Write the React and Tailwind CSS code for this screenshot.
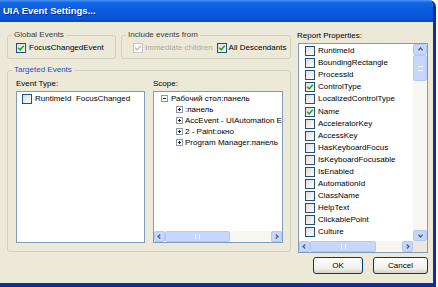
import React from "react";

const props = [
  ["RuntimeId", false],
  ["BoundingRectangle", false],
  ["ProcessId", false],
  ["ControlType", true],
  ["LocalizedControlType", false],
  ["Name", true],
  ["AcceleratorKey", false],
  ["AccessKey", false],
  ["HasKeyboardFocus", false],
  ["IsKeyboardFocusable", false],
  ["IsEnabled", false],
  ["AutomationId", false],
  ["ClassName", false],
  ["HelpText", false],
  ["ClickablePoint", false],
  ["Culture", false],
];

const scopeChildren = [
  ":панель",
  "AccEvent - UIAutomation Events",
  "2 - Paint:окно",
  "Program Manager:панель",
];

function Check({ checked, disabled }) {
  return (
    <span
      className={
        disabled
          ? "flex h-[10px] w-[10px] shrink-0 items-center justify-center border border-[#cac8bb] bg-white"
          : "flex h-[10px] w-[10px] shrink-0 items-center justify-center border border-[#1c5180] bg-[linear-gradient(135deg,#dcdcd7,#ffffff)]"
      }
    >
      {checked && (
        <svg viewBox="0 0 8 8" className="h-[8px] w-[8px]">
          <path
            d="M1.2 3.8 L3.2 5.8 L6.8 1.8"
            fill="none"
            stroke={disabled ? "#c4c2b4" : "#21a121"}
            strokeWidth="1.5"
          />
        </svg>
      )}
    </span>
  );
}

function Expander({ open }) {
  return (
    <span className="flex h-[7px] w-[7px] shrink-0 items-center justify-center border border-[#8b98a6] bg-white">
      <svg viewBox="0 0 5 5" className="h-[5px] w-[5px]">
        <path d="M1 2.5H4" stroke="#222" />
        {!open && <path d="M2.5 1V4" stroke="#222" />}
      </svg>
    </span>
  );
}

const arrows = {
  up: "M2 6 L5 3 L8 6",
  down: "M2 4 L5 7 L8 4",
  left: "M6 2 L3 5 L6 8",
  right: "M4 2 L7 5 L4 8",
};

function ScrollBtn({ dir, className }) {
  return (
    <span
      className={`flex shrink-0 items-center justify-center rounded-[2px] border border-[#b4c8f6] bg-[#c6d6fc] ${className}`}
    >
      <svg viewBox="0 0 10 10" className="h-[7px] w-[7px]">
        <path d={arrows[dir]} fill="none" stroke="#4d6185" strokeWidth="2" />
      </svg>
    </span>
  );
}

function HScroll({ thumbWidth }) {
  return (
    <div className="flex h-[11px] items-stretch bg-[#f7f6f1]">
      <ScrollBtn dir="left" className="w-[11px]" />
      <div className="flex flex-1">
        <span
          className={`flex items-center justify-center rounded-[2px] border border-[#b4c8f6] bg-[#c6d6fc] ${thumbWidth}`}
        >
          <span className="h-[5px] w-[5px] border-x border-[#eef3fe]" />
        </span>
      </div>
      <ScrollBtn dir="right" className="w-[11px]" />
    </div>
  );
}

function GroupLabel({ children, blue }) {
  return (
    <span
      className={
        blue
          ? "-mt-[6px] ml-[4px] h-[10px] w-fit bg-[#ece9d8] px-[2px] leading-[10px] text-[#1b4fd0]"
          : "-mt-[6px] ml-[4px] h-[10px] w-fit bg-[#ece9d8] px-[2px] leading-[10px] text-[#3b3b3b]"
      }
    >
      {children}
    </span>
  );
}

export default function App() {
  return (
    <div className="flex h-[287px] w-[438px] bg-white font-['Liberation_Sans',Arial,sans-serif] text-[8px] text-black">
      <div className="flex h-[287px] w-[436px] flex-col overflow-hidden rounded-tr-[7px] border-r-[3px] border-b-[4px] border-[#0c2f9c] bg-[#ece9d8]">
        {/* Title bar */}
        <div className="flex h-[22px] shrink-0 items-center bg-[linear-gradient(to_bottom,#4a96f8_0%,#1467e4_12%,#0a5bdd_45%,#0956d8_80%,#0848c4_100%)] pl-[3px]">
          <span className="text-[9.5px] font-bold text-white [text-shadow:1px_1px_0_#0a2f8c]">
            UIA Event Settings...
          </span>
        </div>

        {/* Body */}
        <div className="flex flex-1 flex-col">
          <div className="flex">
            {/* Left column */}
            <div className="ml-[7px] flex w-[284px] flex-col">
              <div className="mt-[13px] flex gap-[5px]">
                <div className="flex h-[24px] w-[109px] flex-col rounded-[3px] border border-[#d0d0bf]">
                  <GroupLabel>Global Events</GroupLabel>
                  <div className="ml-[8px] mt-[3px] flex items-center gap-[3px] whitespace-nowrap">
                    <Check checked />
                    <span className="leading-[10px]">FocusChangedEvent</span>
                  </div>
                </div>
                <div className="flex h-[24px] w-[170px] flex-col rounded-[3px] border border-[#d0d0bf]">
                  <GroupLabel>Include events from</GroupLabel>
                  <div className="ml-[11px] mt-[3px] flex items-center whitespace-nowrap">
                    <Check checked disabled />
                    <span className="ml-[2px] leading-[10px] text-[#aca899]">
                      Immediate children
                    </span>
                    <span className="ml-[4px]">
                      <Check checked />
                    </span>
                    <span className="ml-[2px] leading-[10px]">All Descendants</span>
                  </div>
                </div>
              </div>

              <div className="mt-[11px] flex h-[182px] flex-col rounded-[3px] border border-[#d0d0bf]">
                <GroupLabel blue>Targeted Events</GroupLabel>
                <div className="mt-[4px] flex gap-[8px] pl-[8px]">
                  <div className="flex w-[129px] flex-col">
                    <span className="h-[10px] leading-[10px]">Event Type:</span>
                    <div className="mt-[2px] flex h-[152px] flex-col border border-[#7f9db9] bg-white pl-[5px] pt-[1px]">
                      <div className="flex h-[12px] items-center gap-[3px]">
                        <Check />
                        <span className="whitespace-pre">RuntimeId  FocusChanged</span>
                      </div>
                    </div>
                  </div>
                  <div className="flex w-[130px] flex-col">
                    <span className="h-[10px] leading-[10px]">Scope:</span>
                    <div className="mt-[2px] flex h-[152px] flex-col overflow-hidden border border-[#7f9db9] bg-white">
                      <div className="flex flex-1 flex-col overflow-hidden pt-[1px]">
                        <div className="flex h-[11px] items-center pl-[7px]">
                          <Expander open />
                          <span className="ml-[3px] whitespace-nowrap">
                            Рабочий стол:панель
                          </span>
                        </div>
                        {scopeChildren.map((c) => (
                          <div key={c} className="flex h-[11px] items-center pl-[22px]">
                            <Expander />
                            <span className="ml-[2px] whitespace-nowrap">{c}</span>
                          </div>
                        ))}
                      </div>
                      <HScroll thumbWidth="w-[65px]" />
                    </div>
                  </div>
                </div>
              </div>
            </div>

            {/* Right column */}
            <div className="ml-[6px] flex w-[131px] flex-col">
              <span className="mt-[9px] h-[10px] leading-[10px]">Report Properties:</span>
              <div className="ml-[1px] mt-[2px] flex h-[210px] w-[130px] flex-col border border-[#7f9db9] bg-white">
                <div className="flex flex-1">
                  <div className="flex flex-1 flex-col overflow-hidden pl-[6px] pt-[1px]">
                    {props.map(([name, on]) => (
                      <div key={name} className="flex h-[12.1px] shrink-0 items-center gap-[3px]">
                        <Check checked={on} />
                        <span className="whitespace-nowrap">{name}</span>
                      </div>
                    ))}
                  </div>
                  <div className="flex w-[14px] flex-col bg-[#f7f6f1]">
                    <ScrollBtn dir="up" className="h-[11px]" />
                    <span className="flex h-[26px] items-center justify-center rounded-[2px] border border-[#b4c8f6] bg-[#c6d6fc]">
                      <span className="h-[5px] w-[5px] border-y border-[#eef3fe]" />
                    </span>
                    <span className="flex-1" />
                    <ScrollBtn dir="down" className="h-[11px]" />
                  </div>
                </div>
                <div className="flex">
                  <div className="flex-1">
                    <HScroll thumbWidth="w-[66px]" />
                  </div>
                  <span className="w-[14px] bg-[#ece9d8]" />
                </div>
              </div>
            </div>
          </div>

          {/* Buttons */}
          <div className="mt-[4px] flex justify-end gap-[10px] pr-[5px]">
            <button className="h-[17px] w-[50px] rounded-[3px] border border-[#003c74] bg-[linear-gradient(to_bottom,#ffffff,#f0f0ea_70%,#d8d2c6)]">
              OK
            </button>
            <button className="h-[17px] w-[55px] rounded-[3px] border border-[#003c74] bg-[linear-gradient(to_bottom,#ffffff,#f0f0ea_70%,#d8d2c6)]">
              Cancel
            </button>
          </div>
        </div>
      </div>
    </div>
  );
}
